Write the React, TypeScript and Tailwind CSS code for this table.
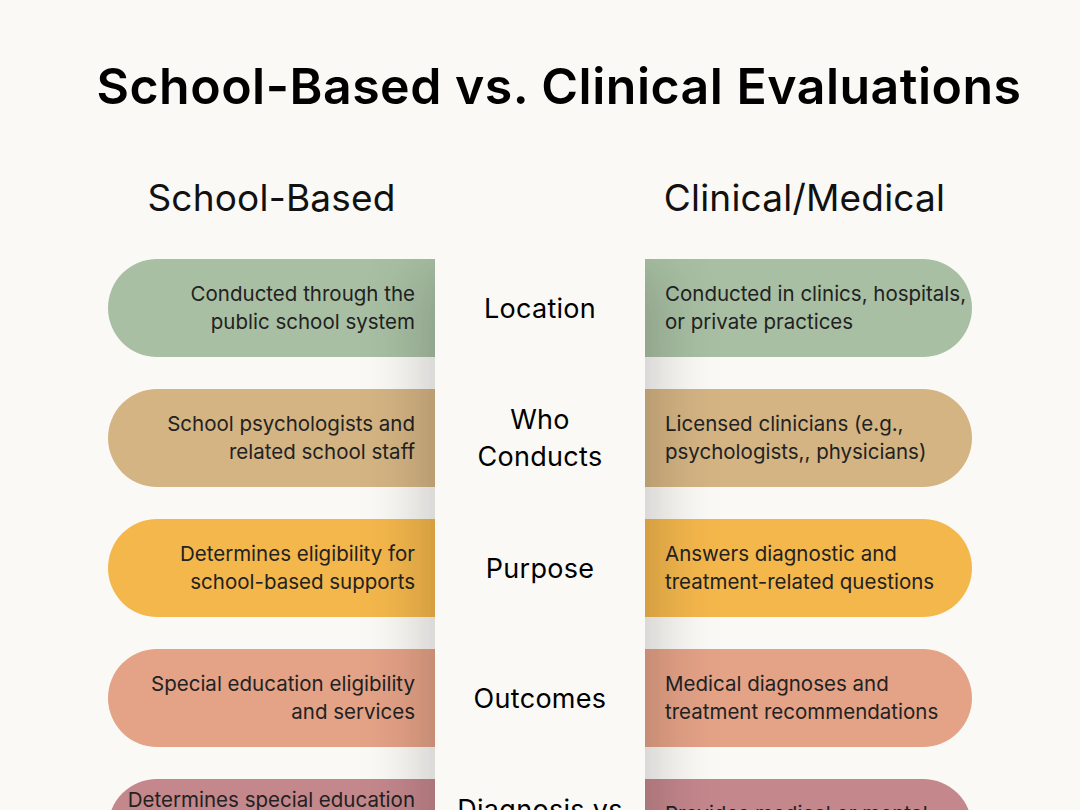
const rows = [
  {
    label: ['Location'],
    school: ['Conducted through the', 'public school system'],
    clinical: ['Conducted in clinics, hospitals,', 'or private practices'],
    color: 'bg-[#a8bfa3]',
  },
  {
    label: ['Who', 'Conducts'],
    school: ['School psychologists and', 'related school staff'],
    clinical: ['Licensed clinicians (e.g.,', 'psychologists,, physicians)'],
    color: 'bg-[#d4b483]',
  },
  {
    label: ['Purpose'],
    school: ['Determines eligibility for', 'school-based supports'],
    clinical: ['Answers diagnostic and', 'treatment-related questions'],
    color: 'bg-[#f4b74c]',
  },
  {
    label: ['Outcomes'],
    school: ['Special education eligibility', 'and services'],
    clinical: ['Medical diagnoses and', 'treatment recommendations'],
    color: 'bg-[#e4a287]',
  },
  {
    label: ['Diagnosis vs', 'Eligibility'],
    school: ['Determines special education', 'eligibility, not medical', 'diagnoses'],
    clinical: ['Provides medical or mental', 'health diagnoses'],
    color: 'bg-[#c4878c]',
  },
]

function Lines({ lines }: { lines: string[] }) {
  return (
    <>
      {lines.map((l, i) => (
        <span key={i} className="block whitespace-nowrap">
          {l}
        </span>
      ))}
    </>
  )
}

export default function App() {
  return (
    <div
      className="h-[810px] w-[1080px] overflow-hidden bg-[#faf9f6] text-[#111]"
      style={{ fontFamily: 'Inter, "Noto Sans", sans-serif' }}
    >
      <h1 className="pl-[38px] pt-[56px] text-center text-[50px] font-semibold leading-[60px] tracking-[0.5px] text-black">
        School-Based vs. Clinical Evaluations
      </h1>

      <div className="mx-auto mt-[60px] grid w-[864px] grid-cols-[327px_210px_327px]">
        <div className="text-center text-[37px] leading-[44px] tracking-[0.2px]">School-Based</div>
        <div />
        <div className="pr-[8px] text-center text-[37px] leading-[44px] tracking-[0.2px]">
          Clinical/Medical
        </div>
      </div>

      <div className="mx-auto mt-[39px] grid w-[864px] grid-cols-[327px_210px_327px] gap-y-[32px]">
        {rows.map((r, i) => (
          <div
            key={'s' + i}
            className={`col-start-1 flex h-[98px] flex-col justify-center rounded-l-full pr-[20px] text-right text-[20.5px] leading-[28px] text-[#222] ${r.color}`}
            style={{ gridRow: i + 1 }}
          >
            <Lines lines={r.school} />
          </div>
        ))}
        {rows.map((r, i) => (
          <div
            key={'c' + i}
            className={`col-start-3 flex h-[98px] flex-col justify-center rounded-r-full pl-[20px] text-left text-[20.5px] leading-[28px] text-[#222] ${r.color}`}
            style={{ gridRow: i + 1 }}
          >
            <Lines lines={r.clinical} />
          </div>
        ))}
        <div className="relative z-10 col-start-2 row-start-1 row-end-6 flex flex-col gap-y-[32px] bg-[#faf9f6] shadow-[-30px_0_55px_-12px_rgba(0,0,0,0.16),30px_0_55px_-12px_rgba(0,0,0,0.16)] [clip-path:inset(0_-140px)]">
          {rows.map((r, i) => (
            <div
              key={'l' + i}
              className="flex h-[98px] flex-col justify-center text-center text-[27px] leading-[37px] tracking-[0.3px] text-black"
            >
              <Lines lines={r.label} />
            </div>
          ))}
        </div>
      </div>
    </div>
  )
}
